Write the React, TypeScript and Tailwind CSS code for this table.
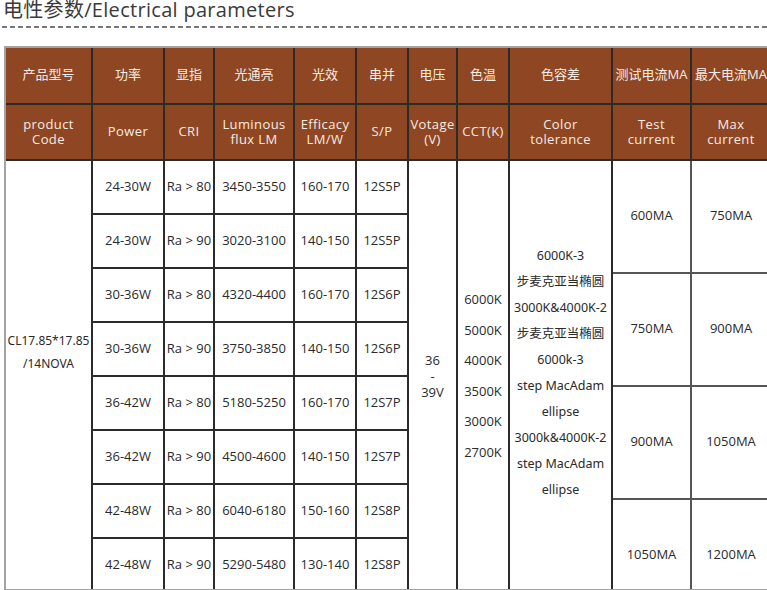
const rows = [
  ["24-30W", "Ra > 80", "3450-3550", "160-170", "12S5P"],
  ["24-30W", "Ra > 90", "3020-3100", "140-150", "12S5P"],
  ["30-36W", "Ra > 80", "4320-4400", "160-170", "12S6P"],
  ["30-36W", "Ra > 90", "3750-3850", "140-150", "12S6P"],
  ["36-42W", "Ra > 80", "5180-5250", "160-170", "12S7P"],
  ["36-42W", "Ra > 90", "4500-4600", "140-150", "12S7P"],
  ["42-48W", "Ra > 80", "6040-6180", "150-160", "12S8P"],
  ["42-48W", "Ra > 90", "5290-5480", "130-140", "12S8P"],
];

const currents = [
  ["600MA", "750MA"],
  ["750MA", "900MA"],
  ["900MA", "1050MA"],
  ["1050MA", "1200MA"],
];

const zhHead = ["产品型号", "功率", "显指", "光通亮", "光效", "串并", "电压", "色温", "色容差", "测试电流MA", "最大电流MA"];
const enHead = [
  ["product", "Code"],
  ["Power"],
  ["CRI"],
  ["Luminous", "flux LM"],
  ["Efficacy", "LM/W"],
  ["S/P"],
  ["Votage", "(V)"],
  ["CCT(K)"],
  ["Color", "tolerance"],
  ["Test", "current"],
  ["Max", "current"],
];

const tolerance = [
  "6000K-3",
  "步麦克亚当椭圆",
  "3000K&4000K-2",
  "步麦克亚当椭圆",
  "6000k-3",
  "step MacAdam",
  "ellipse",
  "3000k&4000K-2",
  "step MacAdam",
  "ellipse",
];

const cct = ["6000K", "5000K", "4000K", "3500K", "3000K", "2700K"];

const sans = "font-['Open_Sans','Noto_Sans_CJK_SC',sans-serif]";
const yahei = "font-['Noto_Sans','Noto_Sans_CJK_SC',sans-serif]";

export default function App() {
  return (
    <div className={`h-[590px] w-[767px] overflow-hidden bg-white ${sans}`}>
      <h1 className="ml-[3px] text-[20px] leading-[20px] font-normal tracking-[0.3px] text-[#3a3a3a]">
        电性参数/Electrical parameters
      </h1>
      <div className="mt-[6px] ml-[2px] h-[1.5px] bg-[repeating-linear-gradient(90deg,#777_0_5px,transparent_5px_8px)]" />

      <div className="mt-[18px] ml-[4px] h-[545px] w-[766px] overflow-hidden border-t-2 border-b-2 border-l-2 border-[#a3a3a3]">
        <div className="flex flex-col gap-[2px] bg-[#2b2b2b]">
          {/* header */}
          <div className="grid grid-cols-[85px_70px_48px_78px_60px_50px_47px_50px_101px_77px_78px] grid-rows-[55px_54px] gap-[2px]">
            {zhHead.map((t) => (
              <div
                key={t}
                className="flex items-center justify-center bg-[#8f4622] text-[13px] whitespace-nowrap text-[#f6ece6]"
              >
                {t}
              </div>
            ))}
            {enHead.map((lines, i) => (
              <div
                key={i}
                className="flex flex-col items-center justify-center bg-[#8f4622] text-[13px] leading-[15px] tracking-[0.4px] text-[#f6ece6]"
              >
                {lines.map((l) => (
                  <span key={l}>{l}</span>
                ))}
              </div>
            ))}
          </div>

          {/* body */}
          <div className="flex gap-[2px]">
            <div className="grid grid-cols-[85px_70px_48px_78px_60px_50px_47px_50px_101px] grid-rows-[repeat(8,52px)] gap-[2px] text-[13px] text-[#2a2a2a]">
              <div
                className={`col-start-1 row-span-8 row-start-1 flex flex-col items-center justify-center bg-white pb-[48px] text-[12px] leading-[23px] ${yahei}`}
              >
                <span>CL17.85*17.85</span>
                <span>/14NOVA</span>
              </div>
              <div className="col-start-7 row-span-8 row-start-1 flex flex-col items-center justify-center bg-white leading-[16px]">
                <span>36</span>
                <span>-</span>
                <span>39V</span>
              </div>
              <div className="col-start-8 row-span-8 row-start-1 flex flex-col items-center justify-center bg-white leading-[30.5px]">
                {cct.map((c) => (
                  <span key={c}>{c}</span>
                ))}
              </div>
              <div
                className={`col-start-9 row-span-8 row-start-1 flex flex-col items-center justify-center bg-white pb-[6px] text-[12.5px] leading-[26px] whitespace-nowrap ${yahei}`}
              >
                {tolerance.map((t, i) => (
                  <span key={i}>{t}</span>
                ))}
              </div>
              {rows.map((r, ri) =>
                r.map((c, ci) => (
                  <div
                    key={`${ri}-${ci}`}
                    className="flex items-center justify-center bg-white whitespace-nowrap"
                  >
                    {c}
                  </div>
                )),
              )}
            </div>

            <div className="grid grid-cols-[77px_78px] grid-rows-[repeat(4,111px)] gap-[2px] bg-[#555] text-[13px] text-[#2a2a2a]">
              {currents.map((r, ri) =>
                r.map((c, ci) => (
                  <div key={`${ri}-${ci}`} className="flex items-center justify-center bg-white">
                    {c}
                  </div>
                )),
              )}
            </div>
          </div>
        </div>
      </div>
    </div>
  );
}
